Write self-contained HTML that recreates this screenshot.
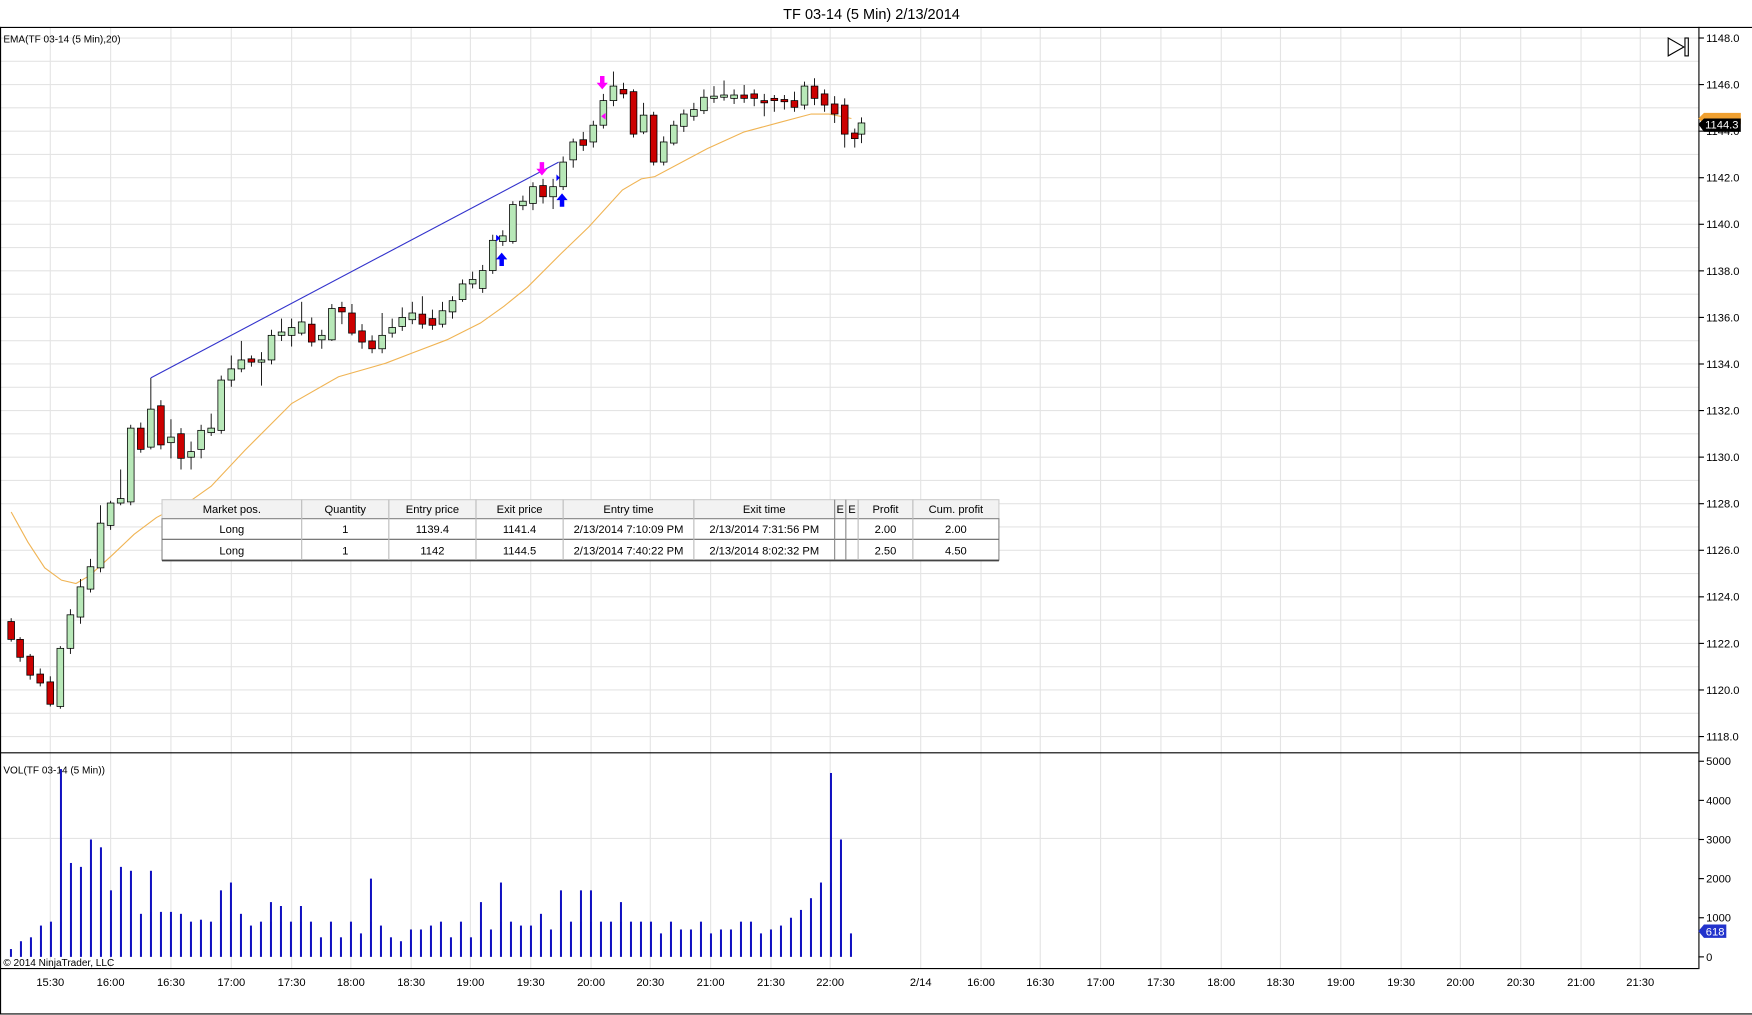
<!DOCTYPE html>
<html><head><meta charset="utf-8">
<style>
html,body{margin:0;padding:0;background:#fff;width:1752px;height:1015px;overflow:hidden}
svg{display:block}
text{font-family:"Liberation Sans",Arial,sans-serif;fill:#000}
</style></head>
<body>
<svg id="s" width="1752" height="1015" viewBox="0 0 1568 908" preserveAspectRatio="none" xmlns="http://www.w3.org/2000/svg">
<rect x="0" y="0" width="1568" height="908" fill="#fff"/>
<g id="grid"></g>
<text x="780" y="17" font-size="13" text-anchor="middle">TF 03-14 (5 Min)  2/13/2014</text>
<line x1="0" y1="24.5" x2="1568" y2="24.5" stroke="#000"/>
<line x1="0.5" y1="24" x2="0.5" y2="907" stroke="#000"/>
<line x1="0" y1="907" x2="1568" y2="907" stroke="#000"/>
<line x1="1520.5" y1="24" x2="1520.5" y2="867" stroke="#000"/>
<line x1="0" y1="673.5" x2="1520" y2="673.5" stroke="#000"/>
<line x1="0" y1="866.5" x2="1520" y2="866.5" stroke="#000"/>
<text x="3" y="38" font-size="9">EMA(TF 03-14 (5 Min),20)</text>
<text x="3" y="692" font-size="9">VOL(TF 03-14 (5 Min))</text>
<text x="3" y="864" font-size="9">© 2014 NinjaTrader, LLC</text>
<g id="axis"></g>
<!-- EMA -->
<polyline fill="none" stroke="#f0b454" stroke-width="1" points="10,458 25,485 40,508 55,519 68,522 80,515 100,497 120,478 140,463 155,455 172,447 189,435 219,403 261,361 303,337 345,325 371,315 400,304 430,289 451,274 472,257 502,227 527,203 557,170 574,160 586,158 633,133 666,118 696,110 726,102 742,102 762,106"/>
<g id="candles"></g>
<line x1="135" y1="338" x2="500" y2="145" stroke="#3333cc" stroke-width="1"/>
<g id="vol"></g>
<!-- arrows -->
<g>
<path d="M483,145 h4 v6 h3 l-5,6 l-5,-6 h3z" fill="#ff00ff"/>
<path d="M537,68 h4 v6 h3 l-5,6 l-5,-6 h3z" fill="#ff00ff"/>
<path d="M538,104 l4,-3 v6z" fill="#ff00ff"/>
<path d="M447,238 h4 v-6 h3 l-5,-6 l-5,6 h3z" fill="#0000ff"/>
<path d="M501,185 h4 v-6 h3 l-5,-6 l-5,6 h3z" fill="#0000ff"/>
<path d="M444,210 l4,3 l-4,3z" fill="#0000ff"/>
<path d="M498,156 l3,3 l-3,3z" fill="#0000ff"/>
</g>
<!-- play icon -->
<path d="M1493,34 L1507,42 L1493,50 Z" fill="none" stroke="#000" stroke-width="1"/>
<rect x="1508" y="34" width="3" height="16" fill="none" stroke="#000" stroke-width="1"/>
<!-- price marker -->
<path d="M1520,106 l5,-5 h33 v10 h-33z" fill="#f0a030"/>
<path d="M1520,111 l5,-5 h33 v12 h-33z" fill="#000"/>
<text x="1541" y="115" font-size="10" text-anchor="middle" style="fill:#fff">1144.3</text>
<path d="M1520,833 l5,-6 h20 v12 h-20z" fill="#2233cc"/>
<text x="1535" y="837" font-size="10" text-anchor="middle" style="fill:#fff">618</text>
<!-- table -->
<g id="tbl"></g>
</svg>
<script>
var NS="http://www.w3.org/2000/svg";
function el(p,t,a,txt){var e=document.createElementNS(NS,t);for(var k in a)e.setAttribute(k,a[k]);if(txt!=null)e.textContent=txt;document.getElementById(p).appendChild(e);return e;}
for(var i=0;i<=30;i++){var y=34+i*20.83;if(y>665)break;el('grid','line',{x1:0,x2:1520,y1:y,y2:y,stroke:'#e4e4e4'});}
var tl=["15:30","16:00","16:30","17:00","17:30","18:00","18:30","19:00","19:30","20:00","20:30","21:00","21:30","22:00","2/14","16:00","16:30","17:00","17:30","18:00","18:30","19:00","19:30","20:00","20:30","21:00","21:30"];
var tx=[45,99,153,207,261,314,368,421,475,529,582,636,690,743,824,878,931,985,1039,1093,1146,1200,1254,1307,1361,1415,1468];
for(var i=0;i<tx.length;i++){el('grid','line',{x1:tx[i],x2:tx[i],y1:25,y2:866,stroke:'#e4e4e4'});el('axis','text',{x:tx[i],y:882,'font-size':10,'text-anchor':'middle'},tl[i]);}
el('grid','line',{x1:0,x2:1520,y1:750,y2:750,stroke:'#e4e4e4'});
for(var p=1148;p>=1118;p-=2){var y=34+(1148-p)*20.83;el('axis','line',{x1:1520,x2:1525,y1:y,y2:y,stroke:'#000'});el('axis','text',{x:1527,y:y+3.5,'font-size':10},p.toFixed(1));}
var vl=[[5000,681],[4000,716],[3000,751],[2000,786],[1000,821],[0,856]];
vl.forEach(function(v){el('axis','line',{x1:1520,x2:1525,y1:v[1],y2:v[1],stroke:'#000'});el('axis','text',{x:1527,y:v[1]+3.5,'font-size':10},String(v[0]));});
var C=[[10,556,572,553,574,1],[18,572,588,570,592,1],[27,587,604,585,608,1],[36,603,611,598,614,1],[45,610,630,605,632,1],[54,580,632,578,634,0],[63,550,580,545,585,0],[72,525,552,518,558,0],[81,507,527,500,530,0],[90,468,508,452,512,0],[99,450,470,448,474,0],[108,446,450,420,452,0],[117,383,449,380,452,0],[126,383,402,378,405,1],[135,366,400,338,402,0],[144,363,398,358,402,1],[153,391,396,375,410,0],[162,388,410,383,420,1],[171,404,409,395,420,0],[180,385,402,380,410,0],[189,383,387,370,390,0],[198,340,385,336,388,0],[207,330,340,318,346,0],[216,322,330,305,333,0],[225,321,324,318,328,1],[234,322,324,315,345,0],[243,300,322,295,326,0],[252,297,300,285,305,0],[261,293,300,285,310,0],[270,288,298,270,300,0],[279,290,306,284,310,1],[288,300,304,295,312,0],[297,276,304,272,305,0],[306,275,279,270,290,1],[315,280,298,272,300,1],[324,296,306,290,312,1],[333,305,312,300,316,1],[342,300,312,280,316,0],[351,293,298,285,302,0],[360,284,292,275,296,0],[369,280,286,270,290,0],[378,281,290,265,294,1],[387,285,291,277,295,1],[396,278,290,270,293,0],[405,269,279,265,285,0],[414,254,268,250,270,0],[423,250,254,243,258,0],[432,242,258,237,262,0],[441,215,242,210,245,0],[450,211,216,206,220,0],[459,183,216,180,218,0],[468,180,184,175,188,0],[477,167,182,163,188,0],[486,166,176,160,182,1],[495,167,176,160,187,0],[504,145,167,140,170,0],[513,127,143,124,150,0],[522,125,130,118,135,1],[531,112,127,108,132,0],[540,90,112,84,115,0],[549,77,90,64,95,0],[558,80,84,74,88,1],[567,82,120,80,123,1],[576,103,118,92,120,0],[585,103,145,100,148,1],[594,127,145,122,148,0],[603,112,128,108,130,0],[612,102,113,98,118,0],[621,98,104,92,108,0],[630,87,99,80,102,0],[639,86,88,77,92,0],[648,85,87,72,90,0],[657,85,88,80,93,0],[666,85,88,76,92,1],[675,84,88,80,95,1],[684,90,92,84,104,1],[693,88,90,85,100,1],[702,89,91,85,98,1],[711,90,96,82,100,1],[720,77,94,73,98,0],[729,77,88,70,94,1],[738,84,94,80,100,1],[747,93,102,86,110,1],[756,94,120,88,132,1],[765,119,124,115,132,1],[771,110,120,105,128,0]];
C.forEach(function(c){el('candles','line',{x1:c[0],x2:c[0],y1:c[3],y2:c[4],stroke:'#000','stroke-width':0.8});var h=Math.max(c[2]-c[1],1.5);el('candles','rect',{x:c[0]-3,y:c[1],width:6,height:h,fill:c[5]?'#cc0000':'#b8e8b8',stroke:'#000','stroke-width':0.7});});
var V=[0.2,0.4,0.5,0.8,0.9,4.8,2.4,2.3,3.0,2.8,1.7,2.3,2.2,1.1,2.2,1.15,1.15,1.1,0.9,0.95,0.9,1.7,1.9,1.1,0.8,0.9,1.4,1.3,0.9,1.3,0.9,0.5,0.9,0.5,0.9,0.6,2.0,0.8,0.5,0.4,0.7,0.7,0.8,0.9,0.5,0.9,0.5,1.4,0.7,1.9,0.9,0.8,0.8,1.1,0.7,1.7,0.9,1.7,1.7,0.9,0.9,1.4,0.9,0.9,0.9,0.6,0.9,0.7,0.7,0.9,0.6,0.7,0.7,0.9,0.9,0.6,0.7,0.8,1.0,1.2,1.5,1.9,4.7,3.0,0.6];
V.forEach(function(v,i){var x=9.8+i*8.95;el('vol','rect',{x:x-0.9,y:856-v*35,width:1.8,height:v*35,fill:'#1010c0'});});
var cols=[145,270,348,426,504,621,747,757,768,817,894];
el('tbl','rect',{x:145,y:447,width:749,height:17,fill:'#f2f2f2',stroke:'#ccc'});
el('tbl','rect',{x:145,y:464,width:749,height:37,fill:'#fff',stroke:'#888'});
el('tbl','line',{x1:145,x2:894,y1:482.5,y2:482.5,stroke:'#666'});
el('tbl','line',{x1:145,x2:894,y1:501.5,y2:501.5,stroke:'#444','stroke-width':1.5});
for(var i=1;i<cols.length-1;i++){el('tbl','line',{x1:cols[i],x2:cols[i],y1:447,y2:501,stroke:i<6||i>7?'#bbb':'#888'});}
var hd=["Market pos.","Quantity","Entry price","Exit price","Entry time","Exit time","E","E","Profit","Cum. profit"];
var r1=["Long","1","1139.4","1141.4","2/13/2014 7:10:09 PM","2/13/2014 7:31:56 PM","","","2.00","2.00"];
var r2=["Long","1","1142","1144.5","2/13/2014 7:40:22 PM","2/13/2014 8:02:32 PM","","","2.50","4.50"];
for(var i=0;i<10;i++){var cx=(cols[i]+cols[i+1])/2;el('tbl','text',{x:cx,y:459,'font-size':10,'text-anchor':'middle'},hd[i]);el('tbl','text',{x:cx,y:477,'font-size':10,'text-anchor':'middle'},r1[i]);el('tbl','text',{x:cx,y:496,'font-size':10,'text-anchor':'middle'},r2[i]);}
</script>
</body></html>
